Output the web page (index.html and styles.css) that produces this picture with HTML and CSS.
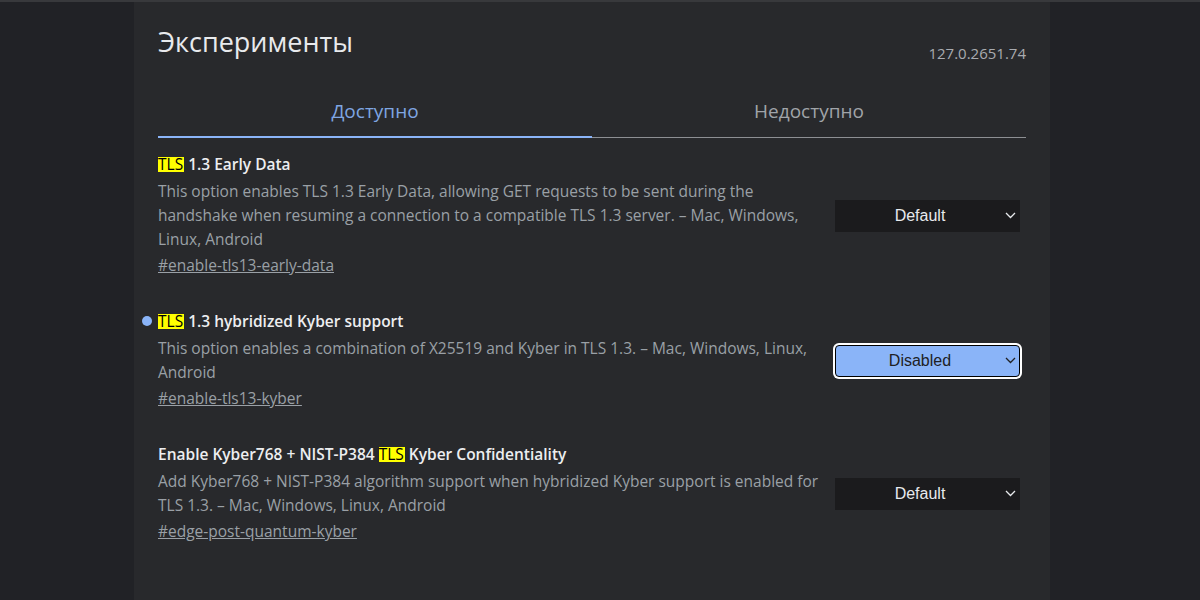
FILE: index.html
```html
<!DOCTYPE html>
<html lang="ru">
<head>
  <meta charset="UTF-8" />
  <meta name="viewport" content="width=device-width, initial-scale=1.0"/>
  <title>Эксперименты</title>
  <link rel="stylesheet" href="styles.css">
</head>
<body>

  <div class="flags">
    <header class="flags-header">
      <h1>Эксперименты</h1>
      <span class="version">127.0.2651.74</span>
    </header>

    <div class="tabs">
      <div class="tab active">Доступно</div>
      <div class="tab">Недоступно</div>
    </div>

    <div class="experiments">
      <div class="experiment">
        <div class="experiment-text">
          <h2 class="experiment-name"><span class="hl">TLS</span> 1.3 Early Data</h2>
          <p class="experiment-desc">This option enables TLS 1.3 Early Data, allowing GET requests to be sent during the handshake when resuming a connection to a compatible TLS 1.3 server. – Mac, Windows, Linux, Android</p>
          <a class="permalink" href="#enable-tls13-early-data">#enable-tls13-early-data</a>
        </div>
        <div class="select">
          <span>Default</span>
          <svg class="chevron" width="11" height="7" viewBox="0 0 11 7"><polyline points="1,1 5.5,5.5 10,1" fill="none" stroke="currentColor" stroke-width="1.3"/></svg>
        </div>
      </div>

      <div class="experiment modified">
        <div class="experiment-text">
          <h2 class="experiment-name"><span class="hl">TLS</span> 1.3 hybridized Kyber support</h2>
          <p class="experiment-desc">This option enables a combination of X25519 and Kyber in TLS 1.3. – Mac, Windows, Linux, Android</p>
          <a class="permalink" href="#enable-tls13-kyber">#enable-tls13-kyber</a>
        </div>
        <div class="select selected">
          <span>Disabled</span>
          <svg class="chevron" width="11" height="7" viewBox="0 0 11 7"><polyline points="1,1 5.5,5.5 10,1" fill="none" stroke="currentColor" stroke-width="1.3"/></svg>
        </div>
      </div>

      <div class="experiment">
        <div class="experiment-text">
          <h2 class="experiment-name">Enable Kyber768 + NIST-P384 <span class="hl">TLS</span> Kyber Confidentiality</h2>
          <p class="experiment-desc">Add Kyber768 + NIST-P384 algorithm support when hybridized Kyber support is enabled for TLS 1.3. – Mac, Windows, Linux, Android</p>
          <a class="permalink" href="#edge-post-quantum-kyber">#edge-post-quantum-kyber</a>
        </div>
        <div class="select">
          <span>Default</span>
          <svg class="chevron" width="11" height="7" viewBox="0 0 11 7"><polyline points="1,1 5.5,5.5 10,1" fill="none" stroke="currentColor" stroke-width="1.3"/></svg>
        </div>
      </div>
    </div>
  </div>

</body>
</html>
```

FILE: styles.css
```css
* {
  box-sizing: border-box;
}
body {
  margin: 0;
  padding-right: 16px;
  font-family: 'Open Sans', 'Noto Sans', sans-serif;
  background: #212226;
  border-top: 2px solid #38393c;
  min-height: 100vh;
  overflow: hidden;
}
.flags {
  width: 916px;
  margin: 0 auto;
  min-height: 600px;
  background: #28292c;
  padding: 22px 24px 40px;
}
.flags-header {
  display: flex;
  justify-content: space-between;
  align-items: flex-end;
}
.flags-header h1 {
  margin: 0;
  font-size: 27px;
  font-weight: 400;
  line-height: 36px;
  color: #e8eaed;
}
.version {
  font-size: 15px;
  line-height: 20px;
  color: #a8abb0;
  margin-bottom: -3px;
}
.tabs {
  display: flex;
  margin-top: 38px;
  border-bottom: 1px solid #8d8f93;
}
.tab {
  flex: 1;
  text-align: center;
  font-size: 19px;
  line-height: 26px;
  padding-bottom: 12px;
  color: #a0a4a9;
}
.tab.active {
  color: #7fa6e2;
  border-bottom: 2px solid #8ab4f8;
  margin-bottom: -1px;
}
.experiments {
  padding-top: 16px;
}
.experiment {
  position: relative;
  display: flex;
  align-items: center;
  justify-content: space-between;
  padding-right: 6px;
  margin-bottom: 34px;
}
.experiment-text {
  width: 665px;
}
.experiment-name {
  margin: 0;
  font-size: 15.5px;
  font-weight: 600;
  line-height: 20px;
  color: #edeef0;
}
.hl {
  display: inline-block;
  line-height: 15px;
  padding-right: 1px;
  background: #ffff00;
  color: #000;
  font-weight: 500;
}
.modified::before {
  content: '';
  position: absolute;
  left: -16px;
  top: 5px;
  width: 10px;
  height: 10px;
  border-radius: 50%;
  background: #8ab4f8;
}
.experiment-desc {
  margin: 5px 0 2px;
  font-size: 15.5px;
  line-height: 24px;
  color: #9aa0a6;
}
.permalink {
  font-size: 15.5px;
  line-height: 24px;
  color: #9aa0a6;
}
.select {
  position: relative;
  width: 185px;
  height: 32px;
  padding: 0 30px 0 15px;
  background: #1b1b1d;
  color: #e8eaed;
  font-family: 'Liberation Sans', Arial, sans-serif;
  font-size: 16px;
  line-height: 32px;
  text-align: center;
}
.select.selected {
  background: #8ab4f8;
  color: #202124;
  border: 1px solid #000;
  border-radius: 4px;
  line-height: 30px;
  box-shadow: 0 0 0 2px #fff;
}
.chevron {
  position: absolute;
  right: 4px;
  top: 12px;
}
.selected .chevron {
  top: 11px;
  right: 3px;
}
```
